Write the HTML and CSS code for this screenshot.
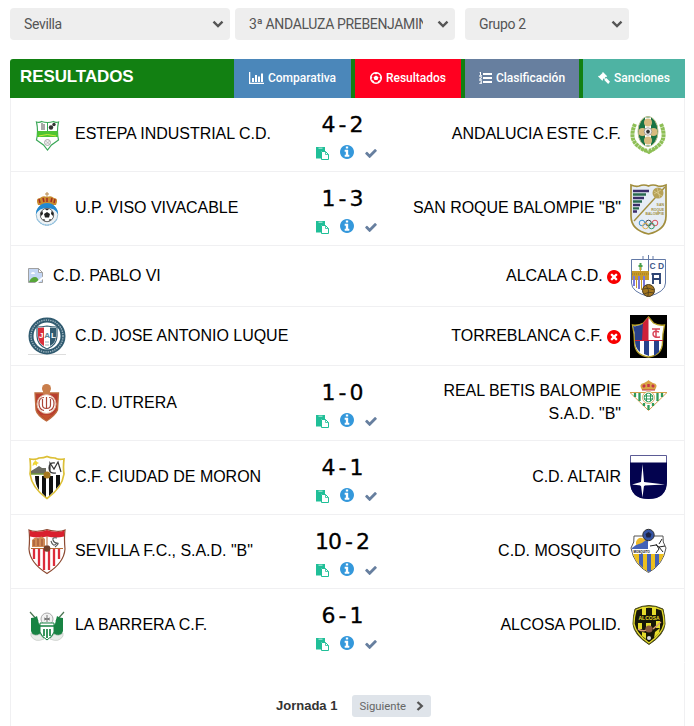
FILE: index.html
```html
<!DOCTYPE html>
<html lang="es">
<head>
    <meta charset="UTF-8">
    <meta name="viewport" content="width=device-width, initial-scale=1.0">
    <title>Resultados</title>
    <link rel="stylesheet" href="styles.css">
</head>
<body>

    <!-- Iconos -->
    <svg class="sprite">
        <symbol id="i-down" viewBox="0 0 12 8"><path d="M1.500 1.700 6 6l4.500-4.300" fill="none" stroke="#555" stroke-width="2.400"/></symbol>
        <symbol id="i-chart" viewBox="0 0 15 12"><path d="M0 0h1.300v10.700H15V12H0zM3 6h2v4H3zM6 3h2v7H6zM9 4.500h2V10H9zM12 1.500h2V10h-2z"/></symbol>
        <symbol id="i-ball" viewBox="0 0 12 12"><circle cx="6" cy="6" r="5.300" fill="none" stroke="currentColor" stroke-width="1.400"/><path d="M6 3.500l2.500 1.800-1 2.800h-3l-1-2.800zM3.500.8h5L6 2.500zM.5 3.800l1.900 1.400L.9 7.800zM11.500 3.800 9.600 5.200l1.500 2.600zM2.100 10l.3-2.600 2.400 3zM9.900 10l-.3-2.600-2.400 3z"/></symbol>
        <symbol id="i-list" viewBox="0 0 13 12"><path d="M4 1h9v2H4zM4 5h9v2H4zM4 9h9v2H4zM1 0h1v3h1v.7H.2V3H1V1H.3zM.2 4.300h2.600v1.800L1.400 7h1.400v.7H.2v-1l1.600-1.300V5H.2zM.2 8.300h2.600V12H.2v-.7h1.700v-.8h-1v-.7h1V9H.2z"/></symbol>
        <symbol id="i-gavel" viewBox="0 0 12 12"><path d="M5 0l4.200 4.200-.8.800-.5-.3-1.100 1.100.9.900.7-.7L12 9.800 10.200 12 6.300 7.900l.4-.8-.8-.8-1.100 1.200.3.500-.8.800L0 4.600l.8-.8.5.3 3.200-3L4.200.8z"/></symbol>
        <symbol id="i-paste" viewBox="0 0 13 13"><path d="M0 0h9v4H5v7.500H0z"/><path d="M2.500 1.200h4" stroke="#fff" stroke-width=".7"/><path d="M5.500 4.500h4l3 3v5h-7z" fill="#fff" stroke="currentColor"/><path d="M9.500 4.500v3h3" fill="none" stroke="currentColor" stroke-width=".8"/></symbol>
        <symbol id="i-info" viewBox="128 128 1536 1536"><path d="M1152 1376v-160q0-14-9-23t-23-9h-96v-512q0-14-9-23t-23-9h-320q-14 0-23 9t-9 23v160q0 14 9 23t23 9h96v320h-96q-14 0-23 9t-9 23v160q0 14 9 23t23 9h448q14 0 23-9t9-23zm-128-896v-160q0-14-9-23t-23-9h-192q-14 0-23 9t-9 23v160q0 14 9 23t23 9h192q14 0 23-9t9-23zm640 416q0 209-103 385.500t-279.500 279.500-385.500 103-385.500-103-279.500-279.500-103-385.500 103-385.500 279.500-279.500 385.500-103 385.500 103 279.500 279.500 103 385.500z"/></symbol>
        <symbol id="i-check" viewBox="121 330 1550 1200"><path d="M1671 566q0 40-28 68l-724 724-136 136q-28 28-68 28t-68-28l-136-136-362-362q-28-28-28-68t28-68l136-136q28-28 68-28t68 28l294 295 656-657q28-28 68-28t68 28l136 136q28 28 28 68z"/></symbol>
        <symbol id="i-times" viewBox="128 128 1536 1536"><path d="M1277 1122q0-26-19-45l-181-181 181-181q19-19 19-45 0-27-19-46l-90-90q-19-19-46-19-26 0-45 19l-181 181-181-181q-19-19-45-19-27 0-46 19l-90 90q-19 19-19 46 0 26 19 45l181 181-181 181q-19 19-19 45 0 27 19 46l90 90q19 19 46 19 26 0 45-19l181-181 181 181q19 19 45 19 27 0 46-19l90-90q19-19 19-46zm387-226q0 209-103 385.500t-279.500 279.500-385.500 103-385.500-103-279.500-279.500-103-385.500 103-385.500 279.500-279.500 385.500-103 385.500 103 279.500 279.500 103 385.500z"/></symbol>
    </svg>

    <!-- Filtros -->
    <div class="filters">
        <div class="filter">
            <select><option>Sevilla</option></select>
            <svg><use href="#i-down"/></svg>
        </div>
        <div class="filter">
            <select><option>3ª ANDALUZA PREBENJAMIN</option></select>
            <svg><use href="#i-down"/></svg>
        </div>
        <div class="filter filter-group">
            <select><option>Grupo 2</option></select>
            <svg><use href="#i-down"/></svg>
        </div>
    </div>

    <div class="panel">
        <div class="panel-head">
            <h1>RESULTADOS</h1>
            <div class="tabs">
                <a class="tab tab-blue"><svg width="15" height="12"><use href="#i-chart"/></svg>Comparativa</a>
                <a class="tab tab-red"><svg width="12" height="12"><use href="#i-ball"/></svg>Resultados</a>
                <a class="tab tab-slate"><svg width="13" height="12"><use href="#i-list"/></svg>Clasificación</a>
                <a class="tab tab-teal"><svg width="12" height="12"><use href="#i-gavel"/></svg>Sanciones</a>
            </div>
        </div>

        <!-- Partidos -->
        <div class="match">
            <div class="team home">
                <svg class="crest" viewBox="0 0 38 54">
                    <path d="M8.500 15q3 1 5-.5 6 2 12 0 2 1.500 5 .5-2 9 0 18l-7 5-4 5-4-5-7-5q2-9 0-18z" fill="#fff" stroke="#3aa757" stroke-width="1.200"/>
                    <path d="M9.500 24h20l.5 6H9z" fill="#4fc433"/><path d="M11 29q8-3 17 0" stroke="#c9e93b" fill="none"/>
                    <path d="M19.500 15v9" stroke="#3aa757"/><path d="M14 16v7M16 17v6" stroke="#555"/>
                    <circle cx="23" cy="20.500" r="2.200" fill="#333"/><circle cx="26" cy="17.500" r="1.700" fill="#333"/>
                    <circle cx="19.500" cy="35.500" r="3" fill="#eee" stroke="#999" stroke-width=".8"/><path d="M17.500 34l4 3m0-3-3 3" stroke="#aaa" stroke-width=".6"/>
                </svg>
                <span>ESTEPA INDUSTRIAL C.D.</span>
            </div>
            <div class="score">
                <b>4 - 2</b>
                <div class="actions"><svg class="paste"><use href="#i-paste"/></svg><svg class="info"><use href="#i-info"/></svg><svg class="check"><use href="#i-check"/></svg></div>
            </div>
            <div class="team away">
                <span>ANDALUCIA ESTE C.F.</span>
                <svg class="crest" viewBox="0 0 38 54">
                    <path d="M5 17Q-1 31 7 38t11 5M31 17q6 14-2 21t-11 5" fill="none" stroke="#8ebf56" stroke-width="4" stroke-dasharray="3 .5"/>
                    <path d="M11 41l8 5 7-5" fill="none" stroke="#8ebf56" stroke-width="2"/>
                    <ellipse cx="18" cy="24.500" rx="10" ry="15" fill="#187344" stroke="#b8bd8a"/>
                    <path d="M15 10.500h6v28h-6z" fill="#fff"/>
                    <g fill="#d7bb7f"><circle cx="18" cy="15.500" r="4"/><circle cx="18" cy="33.500" r="4"/><circle cx="12.500" cy="25" r="4"/><circle cx="23.500" cy="25" r="4"/></g>
                    <circle cx="18" cy="24.500" r="3.800" fill="#eee" stroke="#777" stroke-width=".6"/><path d="M18 22.500l2 1.500-.8 2.400h-2.400L16 24z" fill="#333"/>
                </svg>
            </div>
        </div>

        <div class="match">
            <div class="team home">
                <svg class="crest" viewBox="0 0 38 54">
                    <path d="M19 11v6M17 13h4" stroke="#b98a4c"/><path d="M10 24q-3-7 2-7 3-3 7-1 4-2 7 1 5 0 2 7z" fill="#c98b2e"/>
                    <path d="M12 22l-1-4m5 3-1-4m4 4v-4m4 4 1-4m2 5 1-4" stroke="#a32c25" stroke-width="1.500"/>
                    <circle cx="19" cy="33.500" r="10.800" fill="#eef3f6" stroke="#9bbdd1"/>
                    <path d="M8 33a11 11 0 0 1 22 0q-3-6-11-6T8 33z" fill="#2389cf"/>
                    <circle cx="19" cy="34" r="6.700" fill="#fff" stroke="#222" stroke-width=".7"/>
                    <path d="M19 31l3 2-1 3.500h-4L16 33zM12.500 32l2-2 .5 3-2 2zM25.500 32l-2-2-.5 3 2 2zM17 28h4l-2 1.500zM14.500 38l2 .2.800 2zM23.500 38l-2 .2-.8 2z" fill="#222"/>
                    <path d="M9 38q4 6 10 6t10-6" fill="none" stroke="#8dc1e2" stroke-width="1.300" stroke-dasharray="1.500 1"/>
                </svg>
                <span>U.P. VISO VIVACABLE</span>
            </div>
            <div class="score">
                <b>1 - 3</b>
                <div class="actions"><svg class="paste"><use href="#i-paste"/></svg><svg class="info"><use href="#i-info"/></svg><svg class="check"><use href="#i-check"/></svg></div>
            </div>
            <div class="team away">
                <span>SAN ROQUE BALOMPIE "B"</span>
                <svg class="crest" viewBox="0 0 38 54">
                    <path d="M1 4q5 2 8 1 5-2 9.500 0 4.500-2 9.500 0 3 1 8-1v31q0 14-17.500 18Q1 49 1 35z" fill="#e6edf5" stroke="#a28e3d" stroke-width="1.700"/>
                    <path d="M3 10h16M3 17h11M3 24h7M3 30.500h4" stroke="#3b2d69" stroke-width="2.700"/><path d="M3 13.500h13M3 20.500h9M3 27.300h6" stroke="#29694f" stroke-width="2.300"/>
                    <path d="M4 40 35 6" stroke="#a28e3d" stroke-width="1.400"/><circle cx="28" cy="12" r="5.500" fill="#b6a156"/><path d="M24 10l8 5M24 13l7-4M27 7l3 10" stroke="#e4d69d" stroke-width=".6"/>
                    <g class="crest-text gold" text-anchor="end"><text x="34" y="25">SAN</text><text x="34" y="29.500">ROQUE</text><text x="34" y="34">BALOMPIE</text></g>
                    <g fill="none"><circle cx="12" cy="42" r="2.800" stroke="#3b8fc8"/><circle cx="18.500" cy="42" r="2.800" stroke="#444"/><circle cx="25" cy="42" r="2.800" stroke="#d8515c"/><circle cx="15.500" cy="45" r="2.800" stroke="#dfb052"/><circle cx="21.500" cy="45" r="2.800" stroke="#359665"/></g>
                </svg>
            </div>
        </div>

        <div class="match match-alcala">
            <div class="team home">
                <svg class="no-image" viewBox="0 0 15 15">
                    <path d="M.5.500h10l4 4v10H.5z" fill="#c4d7f5" stroke="#a0a0a0"/><path d="M10.500.500v4h4z" fill="#fff" stroke="#a0a0a0"/>
                    <path d="M1 14q2-5 6-5 3 0 4 5z" fill="#57a639"/><path d="M3 6q0-2 2-2t2 2z" fill="#fff"/><path d="M7 15l8-6.500v2.500l-5 4z" fill="#fff"/>
                </svg>
                <span>C.D. PABLO VI</span>
            </div>
            <div class="score"></div>
            <div class="team away">
                <span>ALCALA C.D. <svg class="out"><use href="#i-times"/></svg></span>
                <svg class="crest" viewBox="0 0 38 54">
                    <path d="M1.500 10.500h34V34q0 9-17 13.500Q1.500 43 1.500 34z" fill="#fff" stroke="#6279a6"/>
                    <path d="M13 7v4M18.500 6v25M23 7v4" stroke="#6279a6"/>
                    <path d="M2 22h17v9H2z" fill="#c69a2a"/><path d="M2 31h16v10l-4 2Q2 40 2 31z" fill="#fff"/>
                    <path d="M4 27v10M9 27v13M14 27v13" stroke="#7a78dd" stroke-width="2"/><path d="M6.500 28v11M11.500 28v13" stroke="#c69a2a"/>
                    <path d="M2 25h17" stroke="#9b7320" stroke-dasharray="1 1"/>
                    <path d="M10.500 14v7M8.500 17h4" stroke="#48a04d" stroke-width="2"/><path d="M10.500 18v4" stroke="#d6a32d"/>
                    <text class="cd" x="19.500" y="20">C D</text>
                    <path d="M23 35V25h7v10M23 30h7M21.500 25h8" fill="none" stroke="#2c4373" stroke-width="1.900"/>
                    <circle cx="18.500" cy="41.500" r="6" fill="#a4771f" stroke="#4a3b20"/><path d="M13 40q6-2 11 1M14 45q5-3 10-1M16 36q4 5 2 11" stroke="#4a3b20" fill="none" stroke-width=".8"/>
                </svg>
            </div>
        </div>

        <div class="match match-luque">
            <div class="team home">
                <svg class="crest" viewBox="0 0 38 54">
                    <path d="M0 45.500h38" stroke="#ddd"/><circle cx="19" cy="27" r="16" fill="#fff" stroke="#315b70" stroke-width="5"/>
                    <circle cx="19" cy="27" r="16" fill="none" stroke="#a8bdc7" stroke-width="1.300" stroke-dasharray="1.300 1"/>
                    <path d="M9 18q5 0 10-1 5 1 10 1v9q0 9-10 13Q9 36 9 27z" fill="#fff" stroke="#315b70" stroke-width="1.200"/>
                    <path d="M10 19l6-.5V37q-6-3-6-10z" fill="#d9303b"/><path d="M22 18.500l6 .5v8q0 7-6 10z" fill="#315b70"/>
                    <g class="crest-text jal"><text x="11" y="29" fill="#fff">J</text><text x="16.300" y="29" fill="#57889b">A</text><text x="23" y="29" fill="#fff">L</text></g>
                    <path d="M17 33h4M17 36h4" stroke="#9ab1bb"/>
                </svg>
                <span>C.D. JOSE ANTONIO LUQUE</span>
            </div>
            <div class="score"></div>
            <div class="team away">
                <span>TORREBLANCA C.F. <svg class="out"><use href="#i-times"/></svg></span>
                <svg class="crest" viewBox="0 0 38 54">
                    <path d="M0 6h37v43H0z"/>
                    <path d="M18.500 8l5 6q5 3 11 2-2 9-2 17 0 13-14 15-14-2-14-15 0-8-2-17 6 1 11-2z" fill="#fff" stroke="#b7a229" stroke-width="1.300"/>
                    <path d="M3 17q6 1 11-3v17H5q0-8-2-14z" fill="#28418b"/><path d="M13 14l5.500-6v23H12z" fill="#ce2039"/>
                    <path d="M5 32h5v11q-5-4-5-11zM14 32h5v15l-5-2zM24 32h5v11l-5 4z" fill="#28418b"/><path d="M5 31.500h28" stroke="#ce2039"/>
                    <path d="M22 20h8M26 20v8M29 23q-6-2-6 2t7 3" fill="none" stroke="#d84457" stroke-width="1.500"/>
                </svg>
            </div>
        </div>

        <div class="match match-utrera">
            <div class="team home">
                <svg class="crest" viewBox="0 0 38 54">
                    <circle cx="18.500" cy="13.500" r="4.500" fill="#c97e4b"/><path d="M7 18h23.500l-1 17q-2 5-11 11Q9 40 8 35z" fill="#b93f2f" stroke="#bd6b3d" stroke-width="1.300"/>
                    <path d="M15 16h7v3h-7z" fill="#c97e4b"/><circle cx="18.500" cy="29" r="9.500" fill="#fff" stroke="#e2b9a0"/>
                    <path d="M16 22.500q-5 0-5 6t5 7M14.500 24v6q0 3.500 4 3.500t4-3.500v-6M18.500 22v12M21 22.500q5 0 5 6t-5 7" fill="none" stroke="#aa4536" stroke-width="1.200"/>
                    <path d="M13 40h11l-5.500 5z" fill="#c3532f"/>
                </svg>
                <span>C.D. UTRERA</span>
            </div>
            <div class="score">
                <b>1 - 0</b>
                <div class="actions"><svg class="paste"><use href="#i-paste"/></svg><svg class="info"><use href="#i-info"/></svg><svg class="check"><use href="#i-check"/></svg></div>
            </div>
            <div class="team away">
                <span>REAL BETIS BALOMPIE S.A.D. "B"</span>
                <svg class="crest" viewBox="0 0 38 54">
                    <path d="M0 17.500h37L18.500 35.500z" fill="#fff" stroke="#d2a04c"/>
                    <path d="M5 18v4M9.500 18v8M14 28v3M27.500 18v8M32 18v4M23 28v3M18.500 30v5" stroke="#2f9a59" stroke-width="2.300"/>
                    <path d="M12 15q-4-6 2-7 4-2 4.500-3 .5 1 4.500 3 6 1 2 7z" fill="#d9a345"/><path d="M13 12l2-2m3.500 2V9m5.500 3-2-2" stroke="#c5344a" stroke-width="2.500"/><path d="M12 15h13" stroke="#c5344a"/>
                    <circle cx="18.500" cy="22.500" r="6" fill="#fff" stroke="#d2a04c" stroke-width=".8"/><circle cx="18.500" cy="22.500" r="4.300" fill="none" stroke="#2f9a59"/><path d="M16.500 19v7M20.500 19v7M14 21h9M14 24h9" stroke="#2f9a59"/>
                </svg>
            </div>
        </div>

        <div class="match">
            <div class="team home">
                <svg class="crest" viewBox="0 0 38 54">
                    <path d="M2 9q6 1 9-1 5 0 8-1.500Q22 8 27 8q3 2 9 1-1 9 0 15-2 14-17 24.500Q4 38 2 24q1-6 0-15z" fill="#fff" stroke="#dcbf35" stroke-width="1.700"/>
                    <path d="M6 12l1.500-2L9 12l2 1-2 1v2l-2-1.500L4.500 16 5 13z" fill="#efd637"/><path d="M3 21l5-3 3-2 3 2h4v6H3z" fill="#6b6c61"/><path d="M3 24h15" stroke="#71983b" stroke-width="1.500"/>
                    <path d="M7 26h4v14q-4-6-4-14zM14 26h4v21l-4-4zM21 26h4v16l-4 4zM28 25h4v9l-4 5z" fill="#111"/>
                    <path d="M22 22v-9l4 6 4-7 3 10M27 13q-6-1-6 5t7 5" fill="none" stroke="#333" stroke-width="1.200"/>
                    <circle cx="19" cy="25" r="3.500" fill="#a5771e"/>
                </svg>
                <span>C.F. CIUDAD DE MORON</span>
            </div>
            <div class="score">
                <b>4 - 1</b>
                <div class="actions"><svg class="paste"><use href="#i-paste"/></svg><svg class="info"><use href="#i-info"/></svg><svg class="check"><use href="#i-check"/></svg></div>
            </div>
            <div class="team away">
                <span>C.D. ALTAIR</span>
                <svg class="crest" viewBox="0 0 38 54">
                    <path d="M.5 5.500h36v26q0 17-18 17t-18-17z" fill="#fff" stroke="#5b5b95"/><path d="M0 12.500h37V31q0 18-18.500 18T0 31z" fill="#03034f"/>
                    <path d="M12.500 14l1.500 18 21 2.500-21 1-1.500 12-1.500-12-9-1 9-2.500z" fill="#fff"/><circle cx="12.500" cy="34" r="2.500" fill="#fff"/>
                </svg>
            </div>
        </div>

        <div class="match">
            <div class="team home">
                <svg class="crest" viewBox="0 0 38 54">
                    <path d="M1 6q5 2 10 1 4 0 8-1.500Q23 7 27 7q5 1 10-1-1 8 0 19-1 14-18 24.500Q2 39 1 25 2 14 1 6z" fill="#fff" stroke="#8d4a32" stroke-width="1.200"/>
                    <path d="M1.500 6.500q5 2 9.500 1 4 0 8-1.500 4 1.500 8 1.500 4.500 1 9.500-1l-.5 6q-8 2-17 0-9 2-17 0z" fill="#d9202e"/>
                    <path d="M19 12v9M3 24.500h32" stroke="#b66b37"/><path d="M4 23v-7q5-5 6-1 3-5 7 0v8z" fill="#cf8a54"/><path d="M6 16v6M10 14v8M14 15v7" stroke="#974b31"/>
                    <path d="M6 25v10M11 25v17M16 25v21M21 25v21M26 25v17M31 25v10" stroke="#dc2c3b" stroke-width="2.300"/>
                    <path d="M29 14q-5-1-4 2t4 3-2 4M23 17q2 7 6 2" fill="none" stroke="#555" stroke-width="1.100"/><circle cx="19" cy="24.500" r="3.300" fill="#73412a"/>
                </svg>
                <span>SEVILLA F.C., S.A.D. "B"</span>
            </div>
            <div class="score">
                <b>10 - 2</b>
                <div class="actions"><svg class="paste"><use href="#i-paste"/></svg><svg class="info"><use href="#i-info"/></svg><svg class="check"><use href="#i-check"/></svg></div>
            </div>
            <div class="team away">
                <span>C.D. MOSQUITO</span>
                <svg class="crest" viewBox="0 0 38 54">
                    <path d="M4 12h29q-1 6 3 12-3 17-17.500 24.500Q4 41 1 24q4-6 3-12z" fill="#fff" stroke="#555"/>
                    <path d="M2 24l16-12v16H2z" fill="#4362b6"/><path d="M6 18q2-5 6-4l4 2-4 3-6 2z" fill="#edb929"/>
                    <path d="M3 30h31q-4 12-15.500 18Q7 42 3 30z" fill="#edc01e"/><path d="M9 30h4v14l-4-4zM17 30h4v17l-2 1-2-1zM25 30h4v10l-4 4z" fill="#4362b6"/>
                    <path d="M2 25h18v5H3z" fill="#fff"/><text class="crest-text mosquito" x="3.500" y="29">MOSQUITO</text>
                    <circle cx="18.500" cy="11" r="5.700" fill="#3555a6" stroke="#333"/><path d="M18.500 8l3 2-1 3.500h-4l-1-3.500z" fill="#1c2344"/>
                    <path d="M20 22l6-1 3 2 6-1M26 20l3 5-3 4M29 23l4 5M29 20l3-5" stroke="#222" fill="none"/>
                </svg>
            </div>
        </div>

        <div class="match match-last">
            <div class="team home">
                <svg class="crest" viewBox="0 0 38 54">
                    <path d="M2 14l8 9M36 14l-8 9" stroke="#4a7552" stroke-width="1.200"/><circle cx="19" cy="21" r="6" fill="#f2f2f2" stroke="#aaa"/><path d="M19 17v7m-3-4 6 2m0-2-6 2" stroke="#777"/>
                    <path d="M3 20q4 0 6-2l2 8 5 4v10q-7 2-11-2L3 33zM35 20q-4 0-6-2l-2 8-5 4v10q7 2 11-2l2-5z" fill="#188343"/>
                    <path d="M3 35q4 4 9 1l4 5q-9 4-13-3zM35 35q-4 4-9 1l-4 5q9 4 13-3z" fill="#e8ece8" stroke="#c3c7c3" stroke-width=".7"/>
                    <path d="M12 25h14v9q-1 4-7 8-6-4-7-8z" fill="#fff" stroke="#188343"/><path d="M16 31v7M19 31v9M22 31v7M12 28h14" stroke="#188343" stroke-width="1.700"/>
                </svg>
                <span>LA BARRERA C.F.</span>
            </div>
            <div class="score">
                <b>6 - 1</b>
                <div class="actions"><svg class="paste"><use href="#i-paste"/></svg><svg class="info"><use href="#i-info"/></svg><svg class="check"><use href="#i-check"/></svg></div>
            </div>
            <div class="team away">
                <span>ALCOSA POLID.</span>
                <svg class="crest" viewBox="0 0 38 54">
                    <path d="M5 11q7-3.500 14-3.500T33 11q2 8 2 15-1 11-16 20.500Q4 37 3 26q0-7 2-15z" fill="#171707" stroke="#4b4b18"/>
                    <path d="M6 12q6-3 13-3t13 3q2 7 2 14-2 10-15 19Q6 36 4 26q0-7 2-14z" fill="none" stroke="#e5dc2c" stroke-width="1.300"/>
                    <path d="M12 10h4v8h-4zM22 10h4v8h-4zM8 25h4v6H8zM16 25h5v5h-5zM26 23h4v7h-4zM12 34l4 1v6l-4-3zM25 34l5-4-1 5-5 5z" fill="#e5dc2c"/>
                    <path d="M6 17h26v6H6z" fill="#171707"/><text class="crest-text alcosa" x="8.500" y="22">ALCOSA</text>
                    <circle cx="19" cy="31" r="3.600" fill="#8a5a40"/><path d="M8 31q5 3 8 1M31 24l-8 7" stroke="#d59a71" stroke-width="1.500" fill="none"/><circle cx="19" cy="40" r="2" fill="#ddd"/>
                </svg>
            </div>
        </div>

        <!-- Paginación -->
        <div class="pager">
            <strong>Jornada 1</strong>
            <button>Siguiente <svg viewBox="0 0 8 10"><path d="M1.500 1l4.300 4-4.300 4" fill="none" stroke="#555" stroke-width="2.300"/></svg></button>
        </div>
    </div>

</body>
</html>
```
FILE: styles.css
```css
body {
    margin: 0;
    padding: 8px 9px 0 10px;
    background-color: #fff;
    color: #000;
    font-family: "Liberation Sans", Arial, sans-serif;
    height: 718px;
    overflow: hidden;
    display: flex;
    flex-direction: column;
}

.sprite {
    position: absolute;
    width: 0;
    height: 0;
}

svg {
    fill: currentColor;
    flex: none;
}

/* Filtros */
.filters {
    display: flex;
    gap: 5px;
    margin-bottom: 19px;
}

.filter {
    position: relative;
    width: 220px;
    height: 32px;
}

.filter-group {
    width: 164px;
    margin-left: 5px;
}

.filter select {
    appearance: none;
    width: 100%;
    height: 32px;
    padding: 0 32px 0 14px;
    border: none;
    border-radius: 4px;
    background-color: #eee;
    color: #555;
    font-family: Roboto, sans-serif;
    font-size: 14px;
    letter-spacing: -0.35px;
}

.filter svg {
    position: absolute;
    right: 6px;
    top: 12px;
    width: 12px;
    height: 8px;
}

/* Panel */
.panel {
    flex: 1;
    box-sizing: border-box;
    width: 675px;
}

.panel-head {
    display: flex;
    justify-content: space-between;
    height: 39px;
    background-color: #128012;
    border-top-left-radius: 3px;
}

.panel-head h1 {
    margin: 0;
    padding-left: 10px;
    color: #fff;
    font-size: 17px;
    letter-spacing: -0.1px;
    line-height: 35px;
}

.tabs {
    display: flex;
    gap: 4px;
}

.tab {
    display: flex;
    align-items: center;
    justify-content: center;
    gap: 4px;
    box-sizing: border-box;
    padding-bottom: 2px;
    color: #fff;
    font-family: Roboto, sans-serif;
    font-size: 12px;
    font-weight: 500;
}

.tab-blue {
    width: 117px;
    background-color: #4b87ba;
}

.tab-red {
    width: 106px;
    background-color: #ff0020;
}

.tab-slate {
    width: 114px;
    background-color: #677f9f;
}

.tab-teal {
    width: 102px;
    background-color: #4eb3a3;
}

/* Partidos */
.match {
    display: grid;
    grid-template-columns: 264px 100px 275px;
    box-sizing: border-box;
    height: 74px;
    padding: 0 17px 1px;
    border: 1px solid #f0f0f2;
    border-top: none;
}

.match-alcala {
    height: 61px;
    padding-bottom: 0;
}

.match-luque {
    height: 59px;
    padding-bottom: 0;
}

.match-utrera {
    height: 75px;
    padding-bottom: 2px;
}

.match-last {
    border-bottom-color: transparent;
}

.team {
    display: flex;
    align-items: center;
    gap: 9px;
    font-size: 16px;
    line-height: 23px;
}

.team span {
    padding-bottom: 2px;
    letter-spacing: -0.03px;
}

.match-utrera .team span {
    padding-bottom: 0;
}

.away {
    justify-content: flex-end;
    text-align: right;
}

.away span {
    max-width: 215px;
}

.crest {
    width: 38px;
    height: 54px;
}

.away .crest {
    margin-right: -1px;
}

.crest-text {
    font-size: 3.5px;
    font-weight: bold;
}

.gold {
    fill: #a28e3d;
}

.jal {
    font-size: 8px;
}

.mosquito {
    font-size: 3px;
}

.alcosa {
    font-size: 5px;
    fill: #e5dc2c;
}

.cd {
    font-size: 8.5px;
    font-weight: bold;
    fill: #44598a;
}

.no-image {
    width: 15px;
    height: 15px;
    margin: 0 1px 2px 0;
}

.out {
    width: 14px;
    height: 14px;
    color: #f80000;
    vertical-align: -3px;
}

.score {
    padding-top: 15px;
    text-align: center;
}

.score b {
    display: block;
    font-family: "DejaVu Sans", sans-serif;
    font-size: 22px;
    font-weight: normal;
    line-height: 24px;
    word-spacing: -2px;
    letter-spacing: -1px;
    -webkit-text-stroke: 0.3px #000;
}

.actions {
    display: flex;
    align-items: center;
    padding: 7px 0 0 24px;
}

.paste {
    width: 13px;
    height: 13px;
    margin: 3px 11px 0 0;
    color: #20bf98;
}

.info {
    width: 14px;
    height: 14px;
    margin-right: 11px;
    color: #3498db;
}

.check {
    width: 12px;
    height: 9px;
    margin-top: 3px;
    color: #677f9f;
}

/* Paginación */
.pager {
    display: flex;
    align-items: center;
    gap: 15px;
    box-sizing: border-box;
    height: 64px;
    padding: 22px 0 0 265px;
    border: 1px solid #f0f0f2;
    border-width: 0 1px;
    color: #333;
    font-size: 13px;
}

.pager strong {
    padding-bottom: 2px;
}

.pager button {
    display: flex;
    align-items: center;
    justify-content: space-between;
    width: 79px;
    height: 22px;
    padding: 0 7px;
    border: none;
    border-radius: 3px;
    background-color: #dfe4ea;
    color: #666;
    font-family: Roboto, sans-serif;
    font-size: 11.3px;
}

.pager button svg {
    width: 8px;
    height: 10px;
}
```
